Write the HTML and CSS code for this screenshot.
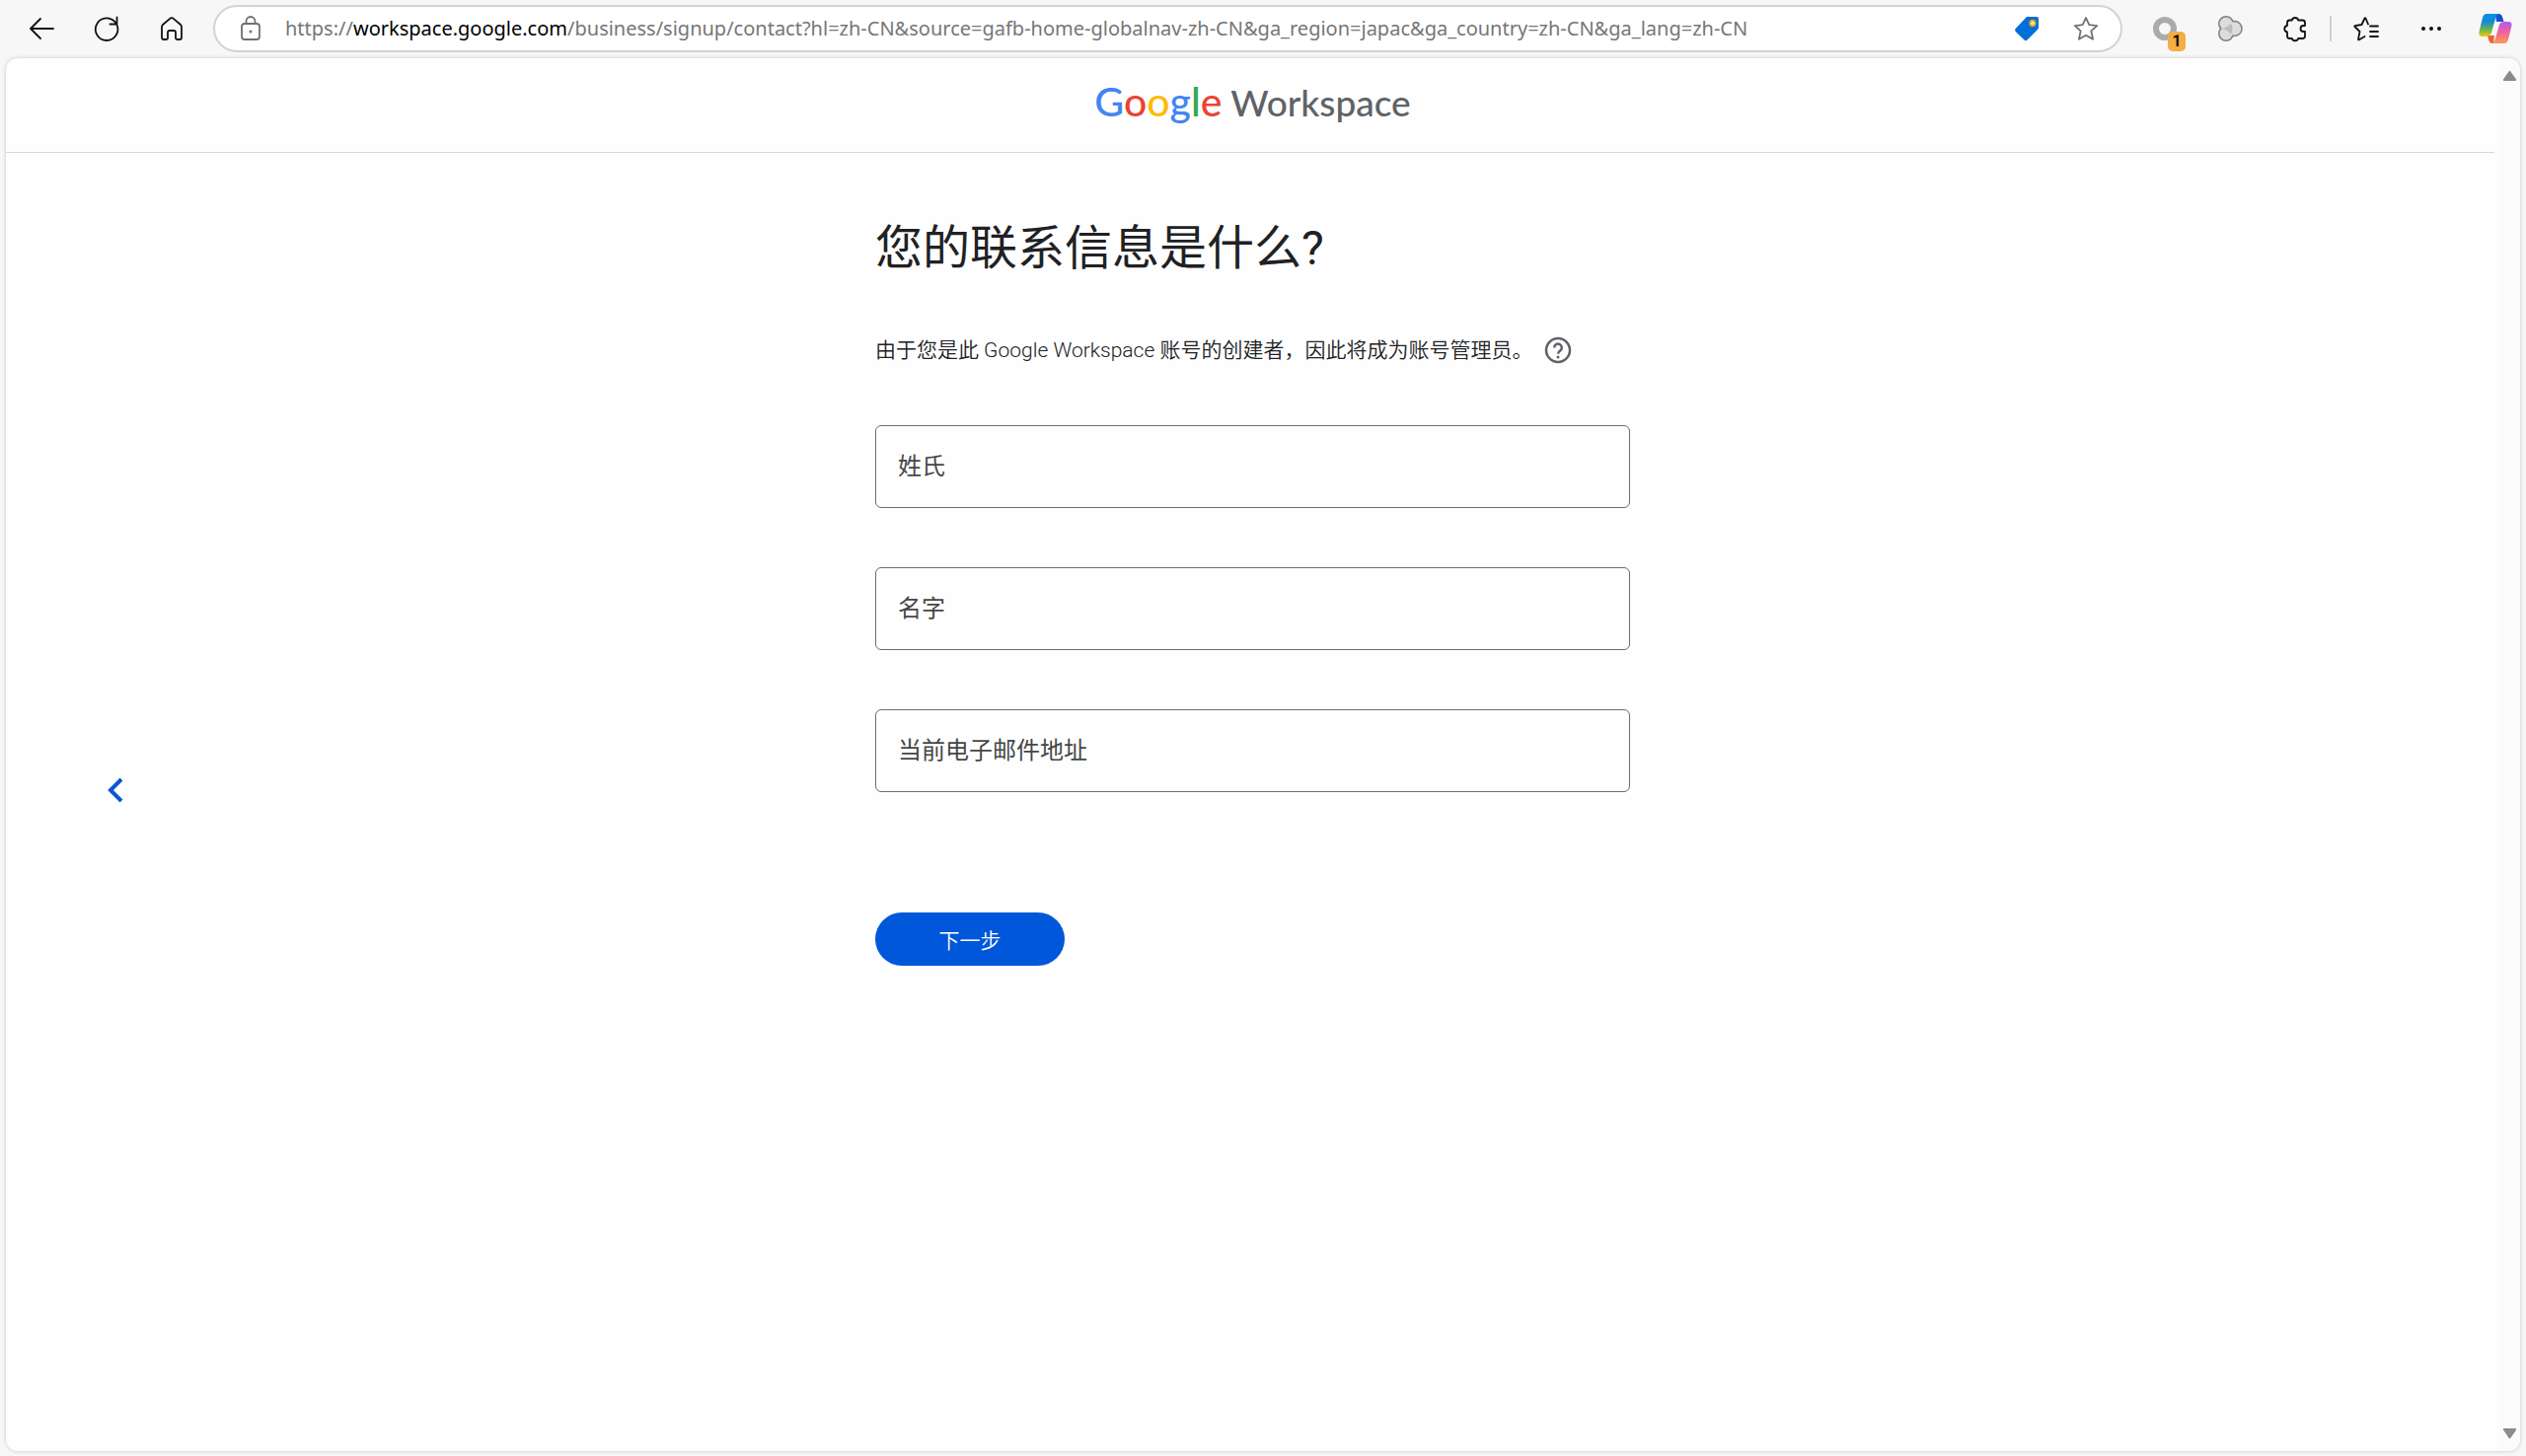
FILE: index.html
```html
<!DOCTYPE html>
<html lang="zh-CN">
<head>
<meta charset="utf-8">
<title>Google Workspace</title>
<link rel="stylesheet" href="styles.css">
</head>
<body>
<header class="toolbar">
  <nav class="nav-buttons" aria-label="导航">
    <button class="icon-button" type="button" aria-label="返回">
      <svg class="icon" viewBox="0 0 28 28"><path d="M26 14H3M13 4L3 14l10 10"/></svg>
    </button>
    <button class="icon-button" type="button" aria-label="刷新">
      <svg class="icon" viewBox="0 0 28 28"><path d="M24.600 10.500A11.300 11.300 0 1 1 22 6.600L24 9M24.500 2.500V9.500H17.500"/></svg>
    </button>
    <button class="icon-button" type="button" aria-label="主页">
      <svg class="icon" viewBox="0 0 28 28"><path d="M4 12.500Q4 11 5 10L12.500 3.600Q14 2.500 15.500 3.600L23 10Q24 11 24 12.500V23Q24 25 22 25H19.500Q18 25 18 23.500V18Q18 16 16 16H12Q10 16 10 18V23.500Q10 25 8.500 25H6Q4 25 4 23Z"/></svg>
    </button>
  </nav>
  <div class="address-bar">
    <svg class="icon icon-muted" viewBox="0 0 28 28"><rect x="5" y="9" width="18" height="16" rx="3"/><path d="M9.500 9V6.500a4.500 4.500 0 0 1 9 0V9"/><circle class="solid-muted" cx="14" cy="17" r="1.500"/></svg>
    <div class="url" role="textbox" aria-label="地址" contenteditable="true" spellcheck="false">https://<span class="url-host">workspace.google.com</span>/business/signup/contact?hl=zh-CN&amp;source=gafb-home-globalnav-zh-CN&amp;ga_region=japac&amp;ga_country=zh-CN&amp;ga_lang=zh-CN</div>
    <button class="icon-button" type="button" aria-label="购物">
      <svg class="icon" viewBox="0 0 28 28"><path class="tag" d="M14.500 2H24Q26 2 26 4V13Q26 14 25 15L14.500 25.500Q13 27 11.500 25.500L2.700 17Q1.300 15.500 2.700 14L13 3Q13.700 2 14.500 2Z"/><circle class="tag-hole" cx="20" cy="8.500" r="2.800"/></svg>
    </button>
    <button class="icon-button" type="button" aria-label="收藏">
      <svg class="icon icon-muted" viewBox="0 0 28 28"><path d="M14 3l3.300 7.200 8 .9-6 5.300 1.800 8.400-7.100-4-7.100 4 1.800-8.400-6-5.300 8-.9z"/></svg>
    </button>
  </div>
  <div class="extensions">
    <button class="icon-button has-badge" type="button" aria-label="扩展">
      <svg class="icon" viewBox="0 0 28 28"><circle class="ring" cx="14" cy="14" r="9"/></svg>
      <span class="badge">1</span>
    </button>
    <button class="icon-button" type="button" aria-label="扩展程序">
      <svg class="icon" viewBox="0 0 28 28">
        <g class="trefoil-edge"><circle cx="10" cy="9" r="6.500"/><circle cx="10" cy="19" r="6.500"/><circle cx="18.500" cy="14" r="6.800"/></g>
        <g class="trefoil"><circle cx="10" cy="9" r="6.500"/><circle cx="10" cy="19" r="6.500"/><circle cx="18.500" cy="14" r="6.800"/></g>
        <path class="trefoil-core" d="M6 14Q11 13 15 8.500Q18 14 15 19.500Q11 15 6 14Z"/>
      </svg>
    </button>
    <button class="icon-button" type="button" aria-label="扩展管理">
      <svg class="icon" viewBox="0 0 28 28"><path d="M10.800 5.500a3.300 3.300 0 0 1 6.400 0H21.500Q24 5.500 24 8V11H22.500a3 3 0 0 0 0 6H24V21.500Q24 24 21.500 24H17.200a3.300 3 0 0 1-6.400 0H8.500Q6 24 6 21.500V17.500a3.300 3.300 0 0 1 0-6.500V8Q6 5.500 8.500 5.500Z"/></svg>
    </button>
    <span class="divider"></span>
    <button class="icon-button" type="button" aria-label="收藏夹">
      <svg class="icon" viewBox="0 0 28 28"><path d="M16 9.500L13.500 3.500Q13 2.800 12.500 3.500L9.500 10l-7 1.200Q2 11.500 2.500 12L7.500 17 6 24.800Q6.200 25.600 7 25.200L12.500 22M18 11.500H26M18 17H26M18 22H26"/></svg>
    </button>
    <button class="icon-button" type="button" aria-label="更多">
      <svg class="icon" viewBox="0 0 28 28"><g class="solid"><circle cx="6" cy="14" r="2"/><circle cx="14" cy="14" r="2"/><circle cx="22" cy="14" r="2"/></g></svg>
    </button>
    <button class="icon-button copilot" type="button" aria-label="Copilot">
      <svg class="icon-copilot" viewBox="0 0 34 32">
        <defs>
          <linearGradient id="cool" x1="0" y1="0" x2="0" y2="1"><stop offset="0" stop-color="#0a8fe8"/><stop offset=".35" stop-color="#1488d8"/><stop offset=".7" stop-color="#6cb848"/><stop offset="1" stop-color="#f5c518"/></linearGradient>
          <linearGradient id="warm" x1="0" y1="0" x2="0" y2="1"><stop offset="0" stop-color="#b05cf0"/><stop offset=".5" stop-color="#f2649a"/><stop offset="1" stop-color="#fb9a4e"/></linearGradient>
        </defs>
        <path fill="#1452c8" d="M17 1H20Q23 1 24 4L25.500 9H18Z"/>
        <path fill="#f0603c" d="M9 23H16L15 31H14Q11 31 10 27Z"/>
        <path fill="url(#cool)" d="M8 1H20Q18 2 17 6L13 20Q12 24 8 24H4Q-1 24 1 17L4 5Q5 1 8 1Z"/>
        <path fill="url(#warm)" d="M26 31H14Q16 30 17 26L21 12Q22 9 26 9H30Q35 9 33 15L30 27Q29 31 26 31Z"/>
      </svg>
    </button>
  </div>
</header>

<div class="viewport">
  <div class="page">
    <div class="brand-bar">
      <a class="brand" href="#"><span class="brand-google"><span class="blue">G</span><span class="red">o</span><span class="yellow">o</span><span class="blue">g</span><span class="green">l</span><span class="red">e</span></span> Workspace</a>
    </div>
    <main class="main">
      <a class="back-link" href="#" aria-label="上一步">
        <svg class="chevron" viewBox="0 0 16 26"><path d="M14 2L3 13l11 11"/></svg>
      </a>
      <form class="form">
        <h1 class="title">您的联系信息是什么?</h1>
        <p class="intro">由于您是此 Google Workspace 账号的创建者，因此将成为账号管理员。
          <button class="help" type="button" aria-label="帮助"><svg viewBox="0 0 28 28"><circle cx="14" cy="14" r="12"/><path d="M10.200 11.500a3.800 3.800 0 1 1 6.500 2.600Q14 16 14 17.800"/><circle class="help-dot" cx="14" cy="21" r="1.500"/></svg></button>
        </p>
        <div class="field"><input id="last-name" type="text"><label for="last-name">姓氏</label></div>
        <div class="field"><input id="first-name" type="text"><label for="first-name">名字</label></div>
        <div class="field"><input id="email" type="email"><label for="email">当前电子邮件地址</label></div>
        <button class="next" type="submit">下一步</button>
      </form>
    </main>
  </div>
  <div class="scrollbar">
    <svg viewBox="0 0 16 12"><path d="M7 1.500Q8 0 9 1.500L15 10Q16 12 14 12H2Q0 12 1 10Z"/></svg>
    <svg viewBox="0 0 16 12"><path d="M7 10.500Q8 12 9 10.500L15 2Q16 0 14 0H2Q0 0 1 2Z"/></svg>
  </div>
</div>
</body>
</html>
```
FILE: styles.css
```css
* { box-sizing: border-box; }

body {
  margin: 0;
  min-height: 100vh;
  display: flex;
  flex-direction: column;
  background: #f7f7f7;
  color: #202124;
  font-family: Roboto, "Noto Sans CJK SC", sans-serif;
}

button { font: inherit; cursor: pointer; }

/* Browser toolbar */
.toolbar {
  display: flex;
  align-items: center;
  height: 59px;
  padding: 0 14px 2px 28px;
}

.nav-buttons { display: flex; gap: 38px; margin-right: 28px; }

.icon-button {
  display: flex;
  flex: none;
  padding: 0;
  border: 0;
  background: none;
}

.icon {
  width: 28px;
  height: 28px;
  flex: none;
  fill: none;
  stroke: #111;
  stroke-width: 1.800;
  stroke-linecap: round;
  stroke-linejoin: round;
}

.icon-muted { stroke: #707070; }
.solid { fill: #111; stroke: none; }
.solid-muted { fill: #707070; stroke: none; }
.tag { fill: #0070d8; stroke: none; }
.tag-hole { fill: #fff0b0; stroke: #e0a020; }
.ring { stroke: #ababab; stroke-width: 6; }
.trefoil-edge { stroke: #808080; stroke-width: 3; }
.trefoil { fill: #dcdcdc; stroke: none; }
.trefoil-core { fill: #bdbdbd; stroke: none; }

.address-bar {
  flex: 1;
  min-width: 0;
  display: flex;
  align-items: center;
  gap: 32px;
  height: 48px;
  padding: 0 21px 0 22px;
  border: 2px solid #d3d3d3;
  border-radius: 24px;
  background: #fff;
}

.url {
  flex: 1;
  min-width: 0;
  margin-left: -11px;
  overflow: hidden;
  white-space: nowrap;
  color: #767676;
  font-family: "Noto Sans", sans-serif;
  font-size: 20px;
  line-height: 32px;
}

.url-host { color: #000; }

.extensions { display: flex; align-items: center; gap: 38px; margin-left: 29px; }
.has-badge { position: relative; }

.badge {
  position: absolute;
  left: 17px;
  top: 17px;
  width: 18px;
  height: 20px;
  border-radius: 5px;
  background: #f5ad45;
  color: #111;
  font-size: 16px;
  font-weight: 700;
  line-height: 20px;
  text-align: center;
}

.divider { width: 2px; height: 26px; margin: 0 -17px; background: #d0d0d0; }
.copilot { margin-left: -4px; }
.icon-copilot { width: 34px; height: 32px; }

/* Web page */
.viewport {
  flex: 1;
  display: flex;
  margin: 0 6px 5px;
  border-radius: 12px;
  background: #fefefe;
  box-shadow: 0 0 4px #00000033;
}

.page { flex: 1; display: flex; flex-direction: column; }

.brand-bar {
  display: flex;
  justify-content: center;
  align-items: center;
  height: 96px;
  margin-right: 5px;
  padding: 0 0 6px 5px;
  border-bottom: 1px solid #d6d8db;
}

.brand {
  color: #5f6368;
  font-family: Lato, sans-serif;
  font-size: 37px;
  font-weight: 500;
  line-height: 48px;
  text-decoration: none;
}

.brand-google { font-size: 41px; }
.blue { color: #4285f4; }
.red { color: #ea4335; }
.yellow { color: #fbbc04; }
.green { color: #34a853; }

.main {
  flex: 1;
  display: grid;
  grid-template-columns: 1fr minmax(0, 765px) 1fr;
  padding-bottom: 24px;
}

.back-link { align-self: center; justify-self: start; margin-left: 103px; }
.chevron { display: block; width: 16px; height: 26px; fill: none; stroke: #0b57d0; stroke-width: 4; }

.form { padding-top: 65px; }

.title {
  margin: 0 0 51px;
  font-size: 48px;
  font-weight: 400;
  line-height: 64px;
}

.intro {
  display: flex;
  align-items: center;
  gap: 12px;
  margin: 0 0 56px;
  font-size: 21px;
  font-weight: 350;
  line-height: 40px;
}

.help { padding: 0; border: 0; background: none; }
.help svg { display: block; width: 28px; height: 28px; fill: none; stroke: #5f6368; stroke-width: 2.500; }
.help .help-dot { fill: #5f6368; stroke: none; }

.field { display: grid; margin-bottom: 60px; }
.field input, .field label { grid-area: 1 / 1; }

.field input {
  width: 100%;
  height: 84px;
  padding: 0 22px;
  border: 1px solid #6b6e6c;
  border-radius: 6px;
  background: none;
  font: inherit;
  font-size: 24px;
}

.field label {
  align-self: center;
  padding-left: 23px;
  color: #444746;
  font-size: 24px;
  line-height: 32px;
  pointer-events: none;
}

.next {
  width: 192px;
  height: 54px;
  margin-top: 62px;
  border: 0;
  border-radius: 27px;
  background: #0057d9;
  color: #fff;
  font-size: 21px;
  font-weight: 350;
}

.scrollbar {
  display: flex;
  flex-direction: column;
  justify-content: space-between;
  align-items: center;
  width: 21px;
  padding: 12px 0;
  border-radius: 0 12px 12px 0;
  background: #fbfbfc;
}

.scrollbar svg { width: 15px; height: 11px; fill: #8b8b8b; }
```
